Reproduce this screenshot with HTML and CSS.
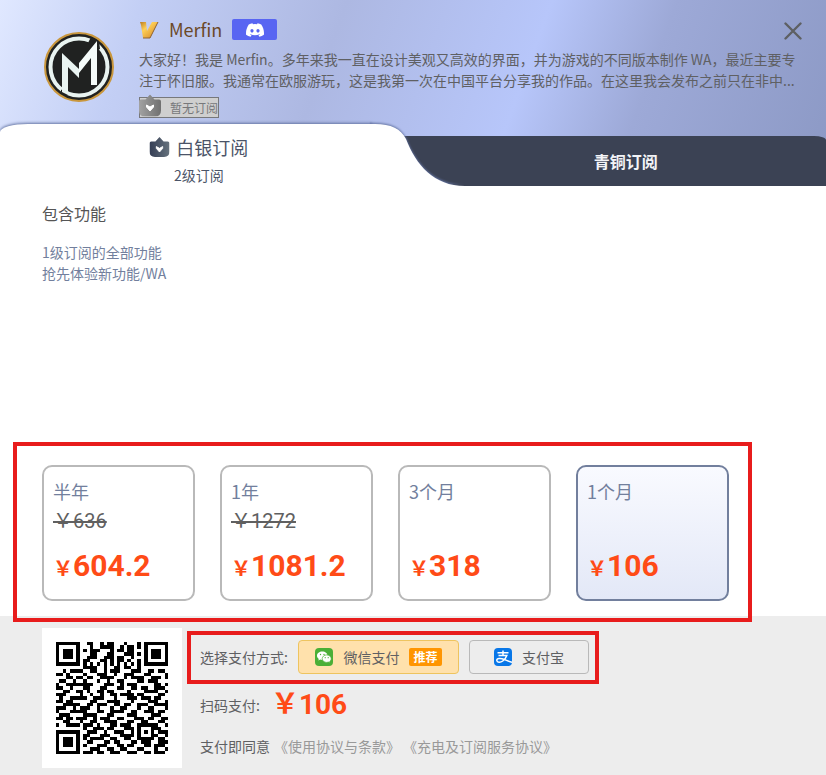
FILE: index.html
```html
<!DOCTYPE html>
<html lang="zh-CN">
<head>
<meta charset="utf-8">
<meta name="viewport" content="width=device-width, initial-scale=1">
<title>Merfin</title>
<link rel="stylesheet" href="styles.css">
</head>
<body>
<svg class="defs" aria-hidden="true">
  <defs>
    <linearGradient id="gold" x1="0" y1="0" x2="1" y2="1"><stop offset="0" stop-color="#b97b22"/><stop offset=".35" stop-color="#ffd056"/><stop offset=".7" stop-color="#e5a43b"/><stop offset="1" stop-color="#8a5518"/></linearGradient>
    <linearGradient id="grey" x1="0" x2="1"><stop offset="0" stop-color="#a2a2a2"/><stop offset="1" stop-color="#707070"/></linearGradient>
    <linearGradient id="slate" x1="0" x2="1"><stop offset="0" stop-color="#343e55"/><stop offset="1" stop-color="#66727d"/></linearGradient>
    <symbol id="shield" viewBox="0 0 22 22"><path d="M2 5h4.500L11 0l4.500 5H20q2 0 2 2v9q0 6-6 6H6q-6 0-6-6V7q0-2 2-2z"/><path d="M7.500 10.500l3.500 2 3.500-2v2L11 16.500l-3.500-4z" fill="#fff" stroke="#fff" stroke-linejoin="round"/></symbol>
  </defs>
</svg>
<main class="dialog">
  <header class="hero">
    <svg class="avatar" viewBox="0 0 70 70" role="img" aria-label="Merfin">
      <circle cx="35" cy="35" r="34" fill="#202221" stroke="#c9973d" stroke-width="2"/>
      <circle cx="35" cy="35" r="28.500" fill="none" stroke="#e9f4f1" stroke-width="4"/>
      <path d="M47 5l8 4 1 8-6 3-6-9z" fill="#202221"/>
      <path d="M17 58l7-3v8l-3 1-4-4z" fill="#202221"/>
      <path d="M18 60V21l17 16v9L24 35v28z" fill="#e9f4f1"/>
      <path d="M35 31L53 9v44h-6V26L35 41z" fill="#f5fcfa"/>
    </svg>
    <div class="profile">
      <div class="name-row">
        <svg class="vip" viewBox="0 0 20 18" aria-hidden="true"><path d="M1 1h6l1 9 5-9h6l-8 16H4L2 4z" fill="url(#gold)"/><path d="M19 1l-8 16H4" fill="none" stroke="#8f6230"/></svg>
        <h1>Merfin</h1>
        <a class="discord" href="#" aria-label="Discord"><svg viewBox="0 0 24 18"><path fill="#fff" d="M20.300 1.500A20 20 0 0 0 15.400 0l-.7 1.300a18 18 0 0 0-5.400 0L8.600 0a20 20 0 0 0-4.900 1.500C.6 6.200-.3 10.700.1 15.200A20 20 0 0 0 6.100 18l1.300-2a13 13 0 0 1-2-1l.5-.4a14 14 0 0 0 12.200 0l.5.4a13 13 0 0 1-2 1l1.300 2a20 20 0 0 0 6-2.800c.5-5.200-.9-9.700-3.600-13.700zM8 12.300c-1.200 0-2.100-1.100-2.100-2.400S6.800 7.500 8 7.500s2.200 1.100 2.100 2.400c0 1.300-.9 2.400-2.100 2.400zm8 0c-1.200 0-2.100-1.100-2.100-2.400s.9-2.400 2.100-2.400 2.200 1.100 2.100 2.400c0 1.300-.9 2.400-2.100 2.400z"/></svg></a>
      </div>
      <p class="bio">大家好！我是 Merfin。多年来我一直在设计美观又高效的界面，并为游戏的不同版本制作 WA，最近主要专注于怀旧服。我通常在欧服游玩，这是我第一次在中国平台分享我的作品。在这里我会发布之前只在非中...</p>
      <div class="status"><svg viewBox="0 0 22 22" fill="url(#grey)" aria-hidden="true"><use href="#shield"/></svg><span>暂无订阅</span></div>
    </div>
    <button class="close" type="button" aria-label="关闭"><svg viewBox="0 0 18 18"><path d="M1.500 1.500l15 15M16.500 1.500l-15 15" stroke="#5e6063" stroke-width="2.400" stroke-linecap="round"/></svg></button>
  </header>

  <nav class="tabs">
    <button class="tab active" type="button">
      <svg class="edge" viewBox="0 0 96 62" aria-hidden="true"><path d="M0 0H6C22 0 32 5 37 15C47 41 65 62 96 62H0z" fill="#fff"/></svg>
      <span class="tab-title"><svg viewBox="0 0 22 22" fill="url(#slate)" aria-hidden="true"><use href="#shield"/></svg>白银订阅</span>
      <span class="tab-level">2级订阅</span>
    </button>
    <button class="tab other" type="button">青铜订阅</button>
  </nav>

  <section class="features">
    <h2>包含功能</h2>
    <ul><li>1级订阅的全部功能</li><li>抢先体验新功能/WA</li></ul>
  </section>

  <section class="plans">
    <button class="plan" type="button"><span class="term">半年</span><s>￥636</s><strong><small>￥</small>604.2</strong></button>
    <button class="plan" type="button"><span class="term">1年</span><s>￥1272</s><strong><small>￥</small>1081.2</strong></button>
    <button class="plan" type="button"><span class="term">3个月</span><strong><small>￥</small>318</strong></button>
    <button class="plan selected" type="button"><span class="term">1个月</span><strong><small>￥</small>106</strong></button>
  </section>

  <footer class="checkout">
    <svg class="qr" id="qr" viewBox="0 0 33 33" role="img" aria-label="扫码支付" shape-rendering="crispEdges"></svg>
    <div class="payment">
      <div class="methods">
        <span>选择支付方式:</span>
        <button class="method wechat" type="button">
          <svg viewBox="0 0 18 18" aria-hidden="true"><rect width="18" height="18" rx="4" fill="#4baf37"/><path d="M7.300 3.500C4.300 3.500 2 5.300 2 7.700c0 1.300.7 2.400 1.800 3.200l-.5 1.700 2-1c.6.2 1.300.3 2 .3C10.300 11.900 12.500 10 12.500 7.700S10.300 3.500 7.300 3.500z" fill="#fff"/><path d="M11.700 6.900c2.500 0 4.500 1.700 4.500 3.800 0 1.100-.6 2.100-1.500 2.800l.4 1.400-1.600-.8c-.6.200-1.200.3-1.800.3-2.500 0-4.500-1.700-4.500-3.700s2-3.800 4.500-3.800z" fill="#fff" stroke="#4baf37" stroke-width=".7"/><g fill="#4baf37"><circle cx="5.500" cy="6.500" r=".7"/><circle cx="9" cy="6.500" r=".7"/><circle cx="10.200" cy="9.700" r=".6"/><circle cx="13.200" cy="9.700" r=".6"/></g></svg>
          <span>微信支付</span><em>推荐</em>
        </button>
        <button class="method alipay" type="button">
          <svg viewBox="0 0 18 18" aria-hidden="true"><rect width="18" height="18" rx="4" fill="#0877e8"/><path d="M3.500 4.800h11M9 2.500v5M4.500 7.500h8.300c-.8 2.300-2.200 4.200-4 5.500-2.300 1.600-5.800 1.600-6-.5-.2-2.500 4-2.500 7.500-1 2.500 1 4.700 2 7.700 2.900" fill="none" stroke="#fff" stroke-width="1.500"/></svg>
          <span>支付宝</span>
        </button>
      </div>
      <p class="scan">扫码支付:<strong>￥106</strong></p>
      <p class="terms">支付即同意<a href="#">《使用协议与条款》</a><a href="#">《充电及订阅服务协议》</a></p>
    </div>
  </footer>
</main>
<script src="qr.js"></script>
</body>
</html>
```
FILE: styles.css
```css
* { box-sizing: border-box; }
body {
  margin: 0;
  font: 14px/21px "Noto Sans CJK SC", sans-serif;
  color: #5f6063;
  background: #fff;
}
h1, h2, p, ul { margin: 0; padding: 0; font-weight: 400; }
ul { list-style: none; }
button { font: inherit; color: inherit; border: 0; padding: 0; background: none; }
a { color: inherit; text-decoration: none; }
.defs { position: absolute; width: 0; height: 0; }
.dialog {
  min-height: 100vh;
  display: flex;
  flex-direction: column;
  background: linear-gradient(110deg, #e0e8ff 0%, #c3cff5 16%, #adb8e2 39%, #b7c6fa 62%, #9da9d7 76%, #8c99c5 100%) top / 100% 180px no-repeat #fff;
}

.hero { position: relative; display: flex; align-items: flex-start; padding: 18px 28px 6px 44px; gap: 25px; }
.avatar { flex: none; width: 70px; height: 70px; margin-top: 14px; }
.profile { flex: 1; }
.name-row { display: flex; align-items: center; gap: 10px; height: 23px; margin-bottom: 8px; }
.vip { width: 20px; height: 18px; }
h1 { font-size: 18px; color: #6b4827; }
.discord { display: grid; place-items: center; width: 45px; height: 21px; border-radius: 2px; background: #5865f2; }
.discord svg { width: 18px; height: 14px; }
.bio { display: -webkit-box; -webkit-box-orient: vertical; -webkit-line-clamp: 2; overflow: hidden; }
.status { display: flex; align-items: center; width: 80px; height: 21px; margin-top: 6px; border: 1px solid #77787b; background: #cfcfcf; color: #77787b; font-size: 12px; }
.status svg { flex: none; width: 22px; height: 23px; margin: -4px 9px 0 -1px; }
.status span { white-space: nowrap; }
.close { position: absolute; top: 22px; right: 24px; width: 18px; height: 18px; }
.close svg { display: block; }

.tabs { display: flex; align-items: flex-end; }
.tab.active {
  position: relative;
  z-index: 1;
  display: flex;
  flex-direction: column;
  align-items: center;
  flex: 0 0 45%;
  height: 62px;
  padding: 10px 0 0 26px;
  background: #fff;
  border-top-left-radius: 28px 8px;
  box-shadow: 0 -1px 3px #6474a3;
  clip-path: inset(-4px -100px 0 0);
  color: #4b5468;
}
.edge { position: absolute; left: 100%; top: 0; width: 96px; height: 62px; margin-left: -3px; filter: drop-shadow(0 -1px 1px #6474a3); clip-path: inset(-4px -4px 0 1px); }
.tab-title { display: flex; align-items: center; gap: 6px; font-size: 18px; line-height: 26px; }
.tab-title svg { width: 21px; height: 20px; }
.tab-level { margin-top: 5px; }
.tab.other { flex: 1; height: 50px; padding-left: 54px; background: #3b4254; border-top-right-radius: 12px 4px; color: #f3f4f7; font-size: 16px; font-weight: 700; }

.features { flex: 1; padding: 15px 42px 0; color: #727f9d; }
h2 { font-size: 16px; line-height: 24px; color: #555; margin-bottom: 17px; }

.plans { position: relative; display: grid; grid-template-columns: repeat(4, 1fr); gap: 25px; margin: 0 97px 15px 42px; }
.plans::after { content: ""; position: absolute; inset: -23px -23px -21px -29px; border: 4px solid #e81c1c; pointer-events: none; }
.plan { display: flex; flex-direction: column; align-items: flex-start; height: 136px; padding: 11px 9px 10px; border: 2px solid #b9b9b9; border-radius: 10px; background: #fff; }
.plan.selected { border-color: #727f9d; background: linear-gradient(#f9faff, #e3e8f7); }
.term { font-size: 18px; line-height: 26px; color: #727f9d; }
.plan s { margin-top: 4px; font-family: Roboto, "Noto Sans CJK SC", sans-serif; font-size: 20px; line-height: 26px; color: #606060; text-decoration-thickness: 2px; }
.plan strong { margin-top: auto; font: 700 30px/40px Roboto, "Noto Sans CJK SC", sans-serif; color: #ff4b17; }
.plan small { font-size: 20px; }

.checkout { display: flex; gap: 18px; padding: 12px 42px 7px; background: #ededed; }
.qr { flex: none; width: 140px; height: 140px; padding: 14px; background: #fff; }
.payment { display: flex; flex-direction: column; }
.methods { position: relative; display: flex; align-items: center; margin-top: 12px; height: 34px; }
.methods::after { content: ""; position: absolute; inset: -9px -10px -10px -13px; border: 4px solid #e81c1c; pointer-events: none; }
.methods > span { width: 98px; }
.method { display: flex; align-items: center; justify-content: center; gap: 10px; height: 34px; border: 1px solid #b9b9b9; border-radius: 4px; }
.method svg { width: 18px; height: 18px; }
.wechat { width: 161px; margin-right: 10px; border-color: #eec45f; background: #ffe1ac; }
.alipay { width: 120px; }
.method em { padding: 0 4px; font-size: 12px; font-style: normal; font-weight: 700; line-height: 18px; color: #fff; background: #ff9500; border-radius: 2px; }
.scan { display: flex; align-items: center; gap: 11px; height: 40px; margin-top: 11px; }
.scan strong { font: 700 28px/40px Roboto, "Noto Sans CJK SC", sans-serif; color: #ff4b17; }
.terms { margin-top: 11px; white-space: nowrap; }
.terms a { color: #999; margin-left: 4px; }
.terms a + a { margin-left: 10px; }
```
FILE: qr.js
```js
const rows = [
  "111111100110010110001000101111111",
  "100000100010011110010110101000001",
  "101110101011100010110110001011101",
  "101110100011000110001110101011101",
  "101110100111001110110010001011101",
  "100000101100011010110100101000001",
  "111111101010101010101010101111111",
  "000000001111001001101100100000000",
  "001011110011001011100011100110110",
  "110100001000111001001110001100001",
  "000110110110011110001011110011101",
  "011001001000100100110000110111000",
  "100111111110001110010111000001101",
  "110010001100011000110011011001110",
  "001100110100110110000100001111001",
  "111000010010010011011110110000110",
  "010011111001110001000111011101100",
  "110110000011000111100010000111001",
  "001111100110111001101100111001111",
  "111001011100100010011000100110001",
  "100011111000110011110011001110110",
  "011100001111000110000111000011100",
  "110110111001011100110001110110011",
  "001100010011001111000110011000110",
  "100111101110100011011100111111001",
  "000000001001110110001110100011100",
  "111111100111001001110010101010111",
  "100000101100011100011110100011001",
  "101110101011110011001100111110110",
  "101110100110001101100011011100111",
  "101110101000111000110110001101110",
  "100000100011100110011000110001001",
  "111111101110110011100111001101110"
];

const path = document.createElementNS("http://www.w3.org/2000/svg", "path");
path.setAttribute("d", rows.map((row, y) =>
  [...row].map((cell, x) => cell === "1" ? `M${x} ${y}h1v1h-1z` : "").join("")
).join(""));
document.getElementById("qr").append(path);
```
